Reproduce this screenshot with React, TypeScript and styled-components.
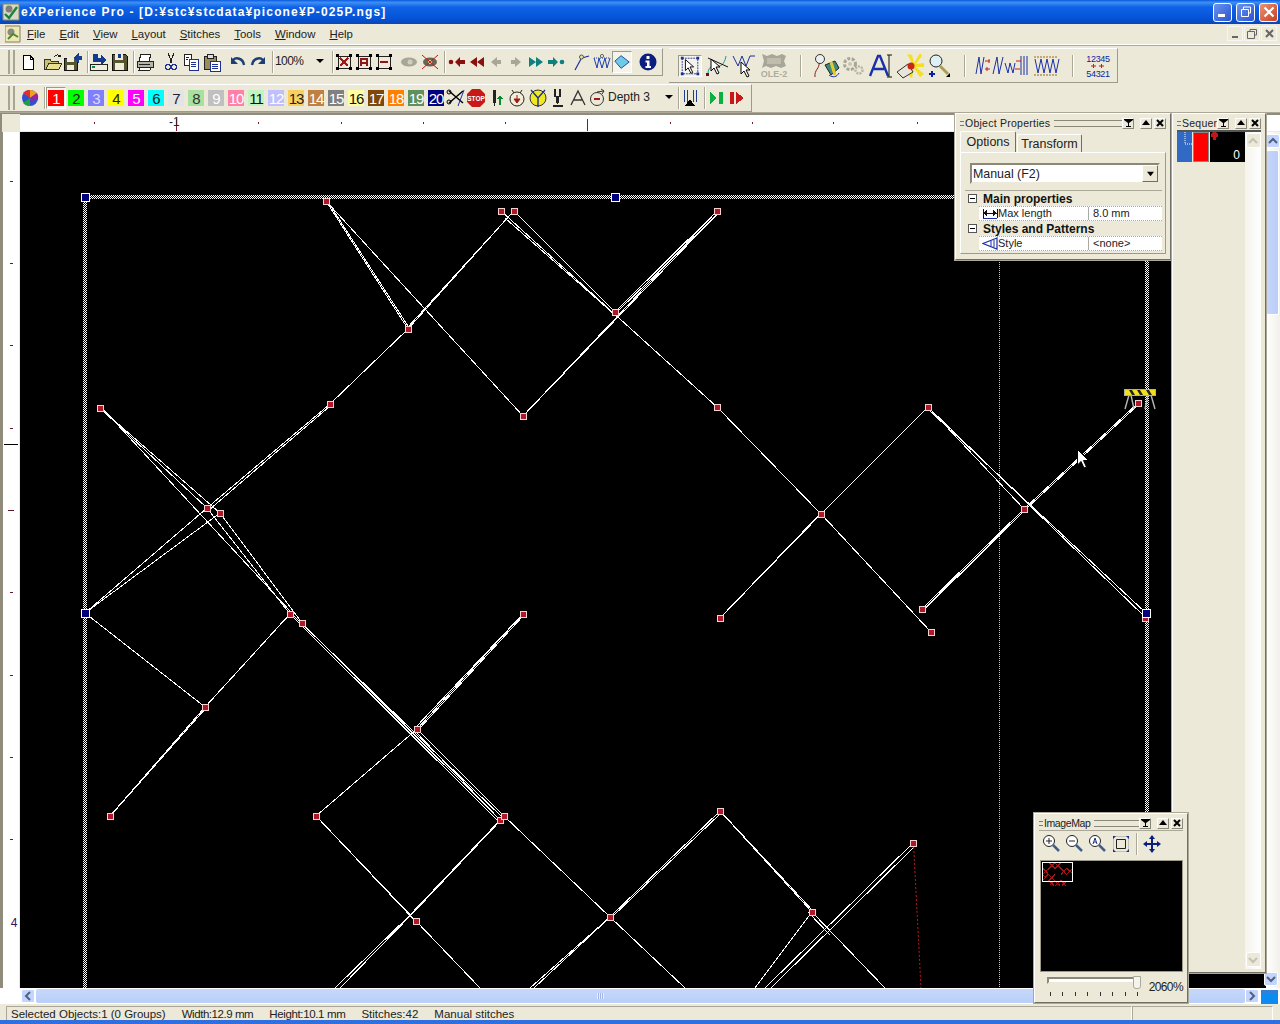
import React from 'react';
import styled, { createGlobalStyle } from 'styled-components';

const GlobalStyle = createGlobalStyle`
  html, body { margin: 0; padding: 0; background: #ece9d8; }
  body { font-family: "Liberation Sans", Arial, sans-serif; font-size: 12px; color: #000; }
`;

const Screen = styled.div`
  position: relative;
  width: 1280px;
  height: 1024px;
  overflow: hidden;
  display: flex;
  flex-direction: column;
  background: #ece9d8;
`;

/* ---------- window chrome ---------- */

const TitleBar = styled.div`
  height: 24px;
  flex: none;
  display: flex;
  align-items: center;
  padding: 0 2px 0 2px;
  background: linear-gradient(#0a5be0 0%, #3d8ff5 10%, #0f62e6 30%, #0554d8 75%, #0a46b8 100%);
  color: #fff;
`;

const TitleText = styled.span`
  margin-left: 1px;
  flex: 1;
  font-size: 12px;
  font-weight: bold;
  letter-spacing: 1.14px;
  white-space: nowrap;
`;

const CaptionButton = styled.div<{ $close?: boolean }>`
  width: 19px;
  height: 19px;
  margin-left: 4px;
  border: 1px solid #fff;
  border-radius: 3px;
  box-sizing: border-box;
  display: flex;
  align-items: center;
  justify-content: center;
  background: ${(p) => (p.$close ? 'linear-gradient(135deg,#e8937a,#c8401c)' : 'linear-gradient(135deg,#6a94ee,#2a54d0)')};
`;

const MenuBar = styled.div`
  height: 21px;
  flex: none;
  display: flex;
  align-items: center;
  padding: 0 2px 1px 5px;
  box-sizing: border-box;
  border-bottom: 1px solid #fff;
  box-shadow: 0 1px 0 #aca899;
  margin-bottom: 1px;
`;

const MenuItems = styled.div`
  display: flex;
  gap: 14px;
  margin-left: 6px;
  flex: 1;
  font-size: 11.4px;
`;

const MenuItem = styled.span`
  color: #222;
  u { text-decoration: underline; }
`;

const ChildButton = styled.div`
  width: 16px;
  height: 15px;
  margin-right: 1px;
  display: flex;
  align-items: center;
  justify-content: center;
  border: 1px solid #f6f5ee;
  box-sizing: border-box;
`;

/* ---------- toolbars ---------- */

const ToolRow = styled.div<{ $h: number }>`
  height: ${(p) => p.$h}px;
  flex: none;
  display: flex;
  align-items: flex-start;
  padding-top: 2px;
  box-sizing: border-box;
`;

const Band = styled.div<{ $w: number; $h: number; $ml?: number }>`
  width: ${(p) => p.$w}px;
  height: ${(p) => p.$h}px;
  margin-left: ${(p) => p.$ml ?? 0}px;
  flex: none;
  display: flex;
  align-items: center;
  box-sizing: border-box;
  border-top: 1px solid #fff;
  border-right: 1px solid #9d9a8a;
  border-bottom: 1px solid #9d9a8a;
`;

const Grip = styled.div`
  height: 24px;
  margin: 0 2px 0 8px;
  flex: none;
  border-left: 2px solid #a8a595;
  border-right: 2px solid #a8a595;
  box-sizing: border-box;
  width: 7px;
`;

const Slot = styled.div<{ $w?: number; $ml?: number; $active?: boolean }>`
  width: ${(p) => p.$w ?? 20}px;
  height: 22px;
  margin-left: ${(p) => p.$ml ?? 0}px;
  flex: none;
  display: flex;
  align-items: center;
  justify-content: center;
  box-sizing: border-box;
  ${(p) => p.$active && 'background: #f4f3ec; border: 1px solid; border-color: #9d9a8a #fff #fff #9d9a8a;'}
`;

const Sep = styled.div<{ $ml?: number }>`
  width: 1px;
  height: 22px;
  margin-left: ${(p) => p.$ml ?? 0}px;
  flex: none;
  background: #aca899;
  box-shadow: 1px 0 0 #fff;
`;

const Combo = styled.div<{ $w: number; $tight?: boolean }>`
  width: ${(p) => p.$w}px;
  height: 22px;
  flex: none;
  display: flex;
  align-items: center;
  justify-content: space-between;
  padding: 0 5px 2px ${(p) => (p.$tight ? 2 : 0)}px;
  box-sizing: border-box;
  color: #222;
  letter-spacing: ${(p) => (p.$tight ? -0.6 : 0)}px;
`;

const ComboArrow = styled.i`
  width: 0;
  height: 0;
  border: 4px solid transparent;
  border-top: 4px solid #000;
  border-bottom: 0;
`;

const SwatchGroup = styled.div`
  display: flex;
  margin-left: 1px;
`;

const Swatch = styled.div<{ $bg: string; $fg: string; $active?: boolean }>`
  width: 20px;
  height: 22px;
  flex: none;
  display: flex;
  align-items: center;
  justify-content: center;
  box-sizing: border-box;
  span {
    width: 16px;
    height: 16px;
    background: ${(p) => p.$bg};
    color: ${(p) => p.$fg};
    font-size: 15px;
    line-height: 17px;
    letter-spacing: -1px;
    text-align: center;
    white-space: nowrap;
  }
  ${(p) => p.$active && 'background: #f6f5ee; border: 1px solid; border-color: #9d9a8a #fff #fff #9d9a8a;'}
`;

/* ---------- work area ---------- */

const Workspace = styled.div`
  flex: 1;
  min-height: 0;
  display: grid;
  grid-template-columns: 20px 1fr 14px;
  grid-template-rows: 19px 1fr 18px;
  border-top: 1px solid #aca899;
`;

const Corner = styled.div`
  background: #ece9d8;
  border-top: 1px solid #8f8c7c;
  border-left: 2px solid #8f8c7c;
  box-sizing: border-box;
`;

const TopRuler = styled.div`
  grid-column: 2 / 4;
  position: relative;
  background: #fff;
  border-top: 2px solid #8f8c7c;
  margin-bottom: 1px;
`;

const LeftRuler = styled.div`
  position: relative;
  background: #fff;
  margin-left: 3px;
  margin-right: 1px;
  box-shadow: -3px 0 0 #8f8c7c;
`;

const TopTick = styled.i<{ $major?: boolean }>`
  position: absolute;
  background: #801830;
  top: ${(p) => (p.$major ? 4 : 7)}px;
  width: 1px;
  height: ${(p) => (p.$major ? 12 : 2)}px;
`;

const SideTick = styled.i<{ $long?: boolean }>`
  position: absolute;
  background: #60182c;
  left: ${(p) => (p.$long ? 5 : 7)}px;
  height: 1px;
  width: ${(p) => (p.$long ? 6 : 3)}px;
`;

/* where the mouse pointer is on the vertical ruler */
const CursorMark = styled.i`
  position: absolute;
  top: 312px;
  left: 1px;
  width: 14px;
  height: 1px;
  background: #000;
`;

const TopLabel = styled.span`
  position: absolute;
  left: 149px;
  top: 1px;
  color: #222;
  font-size: 12px;
  line-height: 12px;
`;

const SideLabel = styled.span`
  position: absolute;
  left: 4px;
  top: 785px;
  width: 14px;
  text-align: center;
  color: #301060;
  font-size: 12px;
  line-height: 12px;
`;

const Canvas = styled.div`
  position: relative;
  background: #000;
  min-height: 0;
  svg { display: block; }
`;

const VScroll = styled.div`
  position: relative;
  background: linear-gradient(90deg, #fff, #f1f0ea);
`;

const ScrollBtn = styled.div`
  position: absolute;
  display: flex;
  align-items: center;
  justify-content: center;
  width: 14px;
  height: 14px;
  border: 1px solid #fff;
  border-radius: 2px;
  box-sizing: border-box;
  background: #c3d5fd;
`;

const UpBtn = styled(ScrollBtn)`
  top: 2px;
  left: 0;
`;

const DownBtn = styled(ScrollBtn)`
  bottom: 2px;
  left: -2px;
`;

const LeftBtn = styled(ScrollBtn)`
  top: 1px;
  left: 21px;
`;

const RightBtn = styled(ScrollBtn)`
  top: 1px;
  right: 21px;
`;

const VThumb = styled.div`
  position: absolute;
  top: 18px;
  left: 0;
  right: 1px;
  height: 165px;
  border: 1px solid #fff;
  border-radius: 2px;
  box-sizing: border-box;
  background: linear-gradient(90deg, #c6d6fa, #b8cdf8);
`;

const HScroll = styled.div`
  grid-column: 1 / 4;
  position: relative;
  display: flex;
  padding: 0 0 0 20px;
  background: #fff;
  border-bottom: 2px solid #ece9d8;
  box-sizing: border-box;
`;

const HThumb = styled.div`
  position: absolute;
  left: 36px;
  right: 35px;
  top: 1px;
  height: 14px;
  border-radius: 2px;
  background: linear-gradient(#c6d8fb, #b9cff9);
  &::after {
    content: '';
    position: absolute;
    left: 561px;
    top: 4px;
    width: 7px;
    height: 6px;
    background: repeating-linear-gradient(90deg, #e8eefc 0 1px, #9fb5e8 1px 2px);
  }
`;

const BlueBox = styled.div`
  position: absolute;
  right: 2px;
  top: 2px;
  width: 17px;
  height: 14px;
  background: linear-gradient(#2f80d8 0 30%, #0c8cf0 30% 100%);
`;

const StatusBar = styled.div`
  height: 14px;
  flex: none;
  display: flex;
  padding-left: 6px;
  color: #222;
  white-space: nowrap;
  font-size: 11.5px;
`;

const StatusPane = styled.div<{ $w: number }>`
  width: ${(p) => p.$w}px;
  flex: none;
  display: flex;
  gap: 16px;
  align-items: center;
  padding-left: 4px;
  box-sizing: border-box;
  border-top: 1px solid #aca899;
  border-left: 1px solid #aca899;
  border-right: 1px solid #fff;
`;

const StatusText = styled.span<{ $squeeze?: number }>`
  letter-spacing: ${(p) => p.$squeeze ?? 0}px;
`;

const BottomEdge = styled.div`
  height: 4px;
  flex: none;
  background: #2f6fe0;
`;

/* ---------- floating palettes ---------- */

const Palette = styled.div<{ $x: number; $y: number; $w: number; $h: number }>`
  position: absolute;
  left: ${(p) => p.$x}px;
  top: ${(p) => p.$y}px;
  width: ${(p) => p.$w}px;
  height: ${(p) => p.$h}px;
  box-sizing: border-box;
  padding: 2px 4px 3px;
  background: #ece9d8;
  border: 1px solid;
  border-color: #fff #716f64 #716f64 #fff;
  box-shadow: 0 0 0 1px #aca899;
  display: flex;
  flex-direction: column;
`;

const PaletteTitle = styled.div<{ $spacing: number }>`
  height: 14px;
  flex: none;
  display: flex;
  align-items: center;
  font-size: 10.5px;
  letter-spacing: ${(p) => p.$spacing}px;
  color: #222;
  white-space: nowrap;
`;

const Dots = styled.i`
  width: 4px;
  height: 5px;
  margin-right: 1px;
  flex: none;
  border-top: 1px solid #777;
  border-bottom: 1px solid #777;
  box-sizing: border-box;
`;

const TitleLines = styled.i`
  flex: 1;
  height: 5px;
  margin: 0 0 0 4px;
  border-top: 1px solid #8a8878;
  border-bottom: 1px solid #8a8878;
`;

const TitleGap = styled.i`
  flex: 1;
`;

const PaletteBtn = styled.div<{ $ml: number }>`
  width: 12px;
  height: 11px;
  margin-left: ${(p) => p.$ml}px;
  flex: none;
  display: flex;
  align-items: center;
  justify-content: center;
  background: #ece9d8;
  border: 1px solid;
  border-color: #fff #8a8878 #8a8878 #fff;
  box-sizing: border-box;
`;

const Tabs = styled.div`
  display: flex;
  align-items: flex-end;
  height: 21px;
  margin-top: 1px;
`;

const Tab = styled.div<{ $active?: boolean }>`
  height: ${(p) => (p.$active ? 21 : 18)}px;
  width: ${(p) => (p.$active ? 56 : 65)}px;
  margin-left: ${(p) => (p.$active ? 0 : 1)}px;
  box-sizing: border-box;
  text-align: center;
  font-size: 12.5px;
  line-height: ${(p) => (p.$active ? 20 : 18)}px;
  color: #222;
  border: 1px solid;
  border-color: #fff #716f64 transparent #fff;
  border-bottom: 0;
  border-radius: 2px 2px 0 0;
`;

const TabBody = styled.div`
  flex: 1;
  margin-bottom: 2px;
  padding: 10px 3px 0 4px;
  border: 1px solid;
  border-color: #fff #9d9a8a #9d9a8a #fff;
`;

const Dropdown = styled.div`
  height: 21px;
  margin: 0 2px 0 5px;
  box-sizing: border-box;
  display: flex;
  align-items: center;
  justify-content: space-between;
  padding-left: 1px;
  background: #fff;
  border: 2px solid;
  border-color: #8a8878 #ece9d8 #ece9d8 #8a8878;
  font-size: 12.4px;
  color: #222;
`;

const DropBtn = styled.div`
  width: 16px;
  height: 17px;
  display: flex;
  align-items: center;
  justify-content: center;
  background: #ece9d8;
  border: 1px solid;
  border-color: #fff #716f64 #716f64 #fff;
  box-sizing: border-box;
`;

const PropGrid = styled.div`
  margin-top: 6px;
  border-top: 1px solid #aca899;
`;

const SectionRow = styled.div`
  height: 15px;
  display: flex;
  align-items: center;
  gap: 6px;
  padding-left: 3px;
  font-weight: bold;
  font-size: 12px;
  color: #111;
`;

const Expander = styled.i`
  position: relative;
  width: 9px;
  height: 9px;
  box-sizing: border-box;
  border: 1px solid #555;
  background: #fff;
  &::after {
    content: '';
    position: absolute;
    left: 1px;
    top: 3px;
    width: 5px;
    height: 1px;
    background: #000;
  }
`;

const PropRow = styled.div`
  height: 13px;
  margin-left: 14px;
  display: grid;
  grid-template-columns: 110px 1fr;
  background: #fff;
  border-top: 1px dotted #aaa;
  border-bottom: 1px dotted #aaa;
  font-size: 11px;
  line-height: 13px;
  color: #222;
`;

const PropName = styled.div`
  display: flex;
  align-items: center;
  padding-left: 3px;
  border-right: 1px solid #aaa;
`;

const PropValue = styled.div`
  padding-left: 4px;
`;

const SeqList = styled.div`
  flex: 1;
  display: grid;
  grid-template-columns: 68px 16px;
  border-top: 2px solid #555;
  min-height: 0;
`;

const SeqRow = styled.div`
  display: flex;
  height: 30px;
  gap: 1px;
`;

const SeqFold = styled.div`
  width: 15px;
  flex: none;
  background: #316ac5;
`;

const SeqColor = styled.div`
  width: 16px;
  flex: none;
  background: #ff0000;
  border: 1px solid #888;
  box-sizing: border-box;
`;

const SeqThumb = styled.div`
  flex: 1;
  position: relative;
  background: #000;
  color: #fff;
  text-align: right;
  padding: 17px 5px 0 0;
  font-size: 12px;
  line-height: 12px;
  svg { position: absolute; left: 0; top: 0; }
`;

const SeqScroll = styled.div`
  display: flex;
  flex-direction: column;
  justify-content: space-between;
  align-items: center;
  background: linear-gradient(90deg, #f4f3ec, #fff);
  padding: 1px 0 2px;
`;

const FadedBtn = styled.div`
  width: 15px;
  height: 15px;
  display: flex;
  align-items: center;
  justify-content: center;
  border: 1px solid #fff;
  border-radius: 2px;
  background: #ece9d8;
  box-sizing: border-box;
`;

const MapTools = styled.div`
  height: 26px;
  flex: none;
  border-top: 1px solid #aca899;
  display: flex;
  align-items: center;
  padding-left: 1px;
`;

const MapPreview = styled.div`
  position: relative;
  height: 110px;
  margin: 4px 0 0 2px;
  width: 141px;
  flex: none;
  background: #000;
  box-shadow: 0 0 0 1px #9d9a8a;
  svg { display: block; }
`;

const ViewFrame = styled.div`
  position: absolute;
  left: 1px;
  top: 1px;
  width: 31px;
  height: 20px;
  border: 1px solid #fff;
  box-sizing: border-box;
`;

const SliderRow = styled.div`
  display: flex;
  margin-top: 6px;
  padding-left: 8px;
  align-items: flex-start;
  justify-content: space-between;
`;

const SliderTrack = styled.div`
  position: relative;
  width: 94px;
  height: 19px;
  &::before {
    content: '';
    position: absolute;
    left: 0;
    right: 0;
    top: 0;
    height: 3px;
    background: #fff;
    border: 2px solid;
    border-color: #8a8878 #ece9d8 #ece9d8 #8a8878;
  }
`;

const SliderKnob = styled.i`
  position: absolute;
  right: 0;
  top: -1px;
  width: 6px;
  height: 11px;
  background: #f4f3ec;
  border: 1px solid #aca899;
  border-radius: 0 0 3px 3px;
`;

const SliderTicks = styled.div`
  position: absolute;
  left: 3px;
  right: 3px;
  bottom: 0;
  height: 4px;
  display: flex;
  justify-content: space-between;
  i { width: 1px; height: 4px; background: #333; }
`;

const ZoomValue = styled.span`
  font-size: 12px;
  color: #222;
  letter-spacing: -0.6px;
  padding-top: 3px;
`;

/* ---------- icons ---------- */

const I: React.FC<{ s?: number; h?: number; children: React.ReactNode }> = ({ s = 20, h = 20, children }) => (
  <svg width={s} height={h} viewBox={`0 0 ${s} ${h}`} fill="none" shapeRendering="crispEdges">{children}</svg>
);

const Tri: React.FC<{ up?: boolean; c?: string; n?: number }> = ({ up, c = '#000', n = 7 }) => (
  <svg width={n} height={n} viewBox="0 0 8 8"><path d={up ? 'M0 6L4 1L8 6Z' : 'M0 2L4 7L8 2Z'} fill={c} /></svg>
);

const Chevron: React.FC<{ d: string; c?: string }> = ({ d, c = '#4d6185' }) => (
  <svg width="10" height="10" viewBox="0 0 10 10" fill="none"><path d={d} stroke={c} strokeWidth="2" /></svg>
);

const FilterGlyph = () => (
  <svg width="9" height="8" viewBox="0 0 9 8"><path d="M0 0H9V1L5 4V7H7V8H2V7H4V4L0 1Z" fill="#000" /></svg>
);
const CloseGlyph = () => (
  <svg width="8" height="8" viewBox="0 0 8 8"><path d="M1 1L7 7M7 1L1 7" stroke="#000" strokeWidth="2" /></svg>
);

const arrow = (x: number, y: number, dir: number, c: string) => (
  <path d={`M${x} ${y - 5}L${x - 6 * dir} ${y}L${x} ${y + 5}V${y + 2}H${x + 4 * dir}V${y - 2}H${x}Z`} fill={c} />
);

const icons: Record<string, React.ReactNode> = {
  newDoc: <I><path d="M5 3.5H12L15.5 7V17.5H5.5V3.5Z" fill="#fff" stroke="#000" /><path d="M12 3V7H16" stroke="#000" /></I>,
  open: <I><path d="M1 7H7L8 9H15V17H1Z" fill="#c9c26a" stroke="#333" /><path d="M3 17L6 11H19L16 17Z" fill="#e8e090" stroke="#333" /><path d="M11 5C13 2 16 2 17 5M17 5L15 4M17 5L18 3" stroke="#222" /></I>,
  saveAs: <I><path d="M1 6H14V18H1Z" fill="#555530" stroke="#111" /><path d="M4 6H11V10H4ZM4 13H11V18H4Z" fill="#f0eed8" /><path d="M10 6L16 1V4H19V8H16V11Z" fill="#1d3f90" /></I>,
  importDoc: <I><path d="M1 12H18V18H1Z" fill="#f0eed8" stroke="#222" /><path d="M3 15H6" stroke="#0a8a30" strokeWidth="2" /><path d="M4 2H9V6H12V3L17 8L12 13V10H4Z" fill="#123a90" /></I>,
  save: <I><path d="M2 2H15L17 4V18H2Z" fill="#555530" stroke="#111" /><path d="M5 2H13V8H5ZM5 11H14V18H5Z" fill="#f0eed8" /><path d="M8 2H11V6H8Z" fill="#123a90" /></I>,
  print: <I><path d="M5 2H15L13 9H3Z" fill="#fff" stroke="#222" /><path d="M1 9H17V15H1Z" fill="#b8b5a5" stroke="#222" /><path d="M4 15H15L14 18H3Z" fill="#fff" stroke="#222" /><path d="M3 12H14" stroke="#222" /></I>,
  cut: <I><path d="M7 1L11 11M13 1L9 11" stroke="#222" /><circle cx="7" cy="15" r="2.5" stroke="#1d2f90" strokeWidth="1.5" /><circle cx="13" cy="15" r="2.5" stroke="#1d2f90" strokeWidth="1.5" /></I>,
  copy: <I><path d="M3 2H10V13H3Z" fill="#fff" stroke="#222" /><path d="M8 7H17V18H8Z" fill="#fff" stroke="#1d2f90" /><path d="M10 10H15M10 12H15M10 14H15" stroke="#1d2f90" /><path d="M5 5H8M5 7H7" stroke="#222" /></I>,
  paste: <I><path d="M2 4H14V17H2Z" fill="#9a8f5c" stroke="#222" /><path d="M5 2H11V6H5Z" fill="#ddd" stroke="#222" /><path d="M8 9H18V19H8Z" fill="#fff" stroke="#1d2f90" /><path d="M10 12H16M10 14H16M10 16H16" stroke="#1d2f90" /></I>,
  undo: <svg width="20" height="20" viewBox="0 0 20 20" fill="none"><path d="M5 8C8 5 15 6 16 13" stroke="#1d3f78" strokeWidth="2.4" /><path d="M3 5V12H10Z" fill="#1d3f78" /></svg>,
  redo: <svg width="20" height="20" viewBox="0 0 20 20" fill="none"><path d="M15 8C12 5 5 6 4 13" stroke="#1d3f78" strokeWidth="2.4" /><path d="M17 5V12H10Z" fill="#1d3f78" /></svg>,
  boxX: <I><path d="M4 4H16V16H4Z" fill="#f6e8d8" stroke="#222" /><path d="M6 6L14 14M14 6L6 14" stroke="#a01818" strokeWidth="2" /><path d="M2 2H5V5H2ZM15 2H18V5H15ZM2 15H5V18H2ZM15 15H18V18H15Z" fill="#000" /></I>,
  boxA: <I><path d="M4 4H16V16H4Z" fill="#f6e8d8" stroke="#222" /><path d="M7 14V7H13V14M7 11H13" stroke="#8a1818" strokeWidth="1.6" /><path d="M2 2H5V5H2ZM15 2H18V5H15ZM2 15H5V18H2ZM15 15H18V18H15Z" fill="#000" /></I>,
  boxMinus: <I><path d="M4 4H16V16H4Z" fill="#f6e8d8" stroke="#222" /><path d="M6 10H14" stroke="#8a1818" strokeWidth="2" /><path d="M2 2H5V5H2ZM15 2H18V5H15ZM2 15H5V18H2ZM15 15H18V18H15Z" fill="#000" /></I>,
  eyeGray: <svg width="20" height="20" viewBox="0 0 20 20"><ellipse cx="10" cy="10" rx="8" ry="4.5" fill="#a8a698" /><circle cx="11" cy="10" r="2.5" fill="#d0cebf" /></svg>,
  eyeCross: <svg width="20" height="20" viewBox="0 0 20 20" fill="none"><ellipse cx="10" cy="10" rx="7" ry="4.5" fill="#6a6655" /><circle cx="10" cy="10" r="2" fill="#e8e090" /><path d="M2 3L18 17M18 3L2 17" stroke="#c01818" /></svg>,
  dotLeft: <svg width="20" height="20" viewBox="0 0 20 20"><circle cx="4" cy="10" r="2.3" fill="#8a1010" /><path d="M8 10L13 5V8H18V12H13V15Z" fill="#8a1010" /></svg>,
  twoLeft: <svg width="20" height="20" viewBox="0 0 20 20"><path d="M10 5L3 10L10 15ZM17 5L10 10L17 15Z" fill="#8a1010" /></svg>,
  grayLeft: <svg width="18" height="20" viewBox="0 0 18 20">{arrow(9, 10, 1, '#a8a698')}</svg>,
  grayRight: <svg width="18" height="20" viewBox="0 0 18 20">{arrow(9, 10, -1, '#a8a698')}</svg>,
  twoRight: <svg width="20" height="20" viewBox="0 0 20 20"><path d="M3 5L10 10L3 15ZM10 5L17 10L10 15Z" fill="#0e8080" /></svg>,
  rightDot: <svg width="20" height="20" viewBox="0 0 20 20"><path d="M12 10L7 5V8H2V12H7V15Z" fill="#0e8080" /><circle cx="16" cy="10" r="2.3" fill="#0e8080" /></svg>,
  nodeLine: <svg width="20" height="20" viewBox="0 0 20 20" fill="none"><path d="M3 18L9 7" stroke="#1a2fa0" strokeWidth="1.2" /><path d="M10 6L17 4" stroke="#1a2fa0" strokeWidth="1.2" /><circle cx="9.5" cy="5" r="2" fill="#e8e8a0" stroke="#555" /></svg>,
  zigzag: <svg width="20" height="20" viewBox="0 0 20 20" fill="none"><path d="M2 6L5 16L7 6L10 16L13 6L15 16L18 6" stroke="#1a3fb0" /><path d="M2 6H18" stroke="#1a3fb0" strokeDasharray="1 1" /><circle cx="10" cy="4" r="1.6" stroke="#666" /></svg>,
  diamond: <svg width="20" height="20" viewBox="0 0 20 20"><path d="M2 9L9 3L18 10L9 17Z" fill="#6ecbe8" stroke="#1a3f90" /></svg>,
  info: <svg width="20" height="20" viewBox="0 0 20 20"><circle cx="10" cy="10" r="8.5" fill="#0a1f80" /><path d="M8.5 4H11.5V7H8.5ZM7.5 8.5H11.5V14H13V16H7.5V14H9V10.5H7.5Z" fill="#fff" /></svg>,
  pointer: <svg width="24" height="24" viewBox="0 0 24 24" fill="none"><path d="M3.5 3.5H20.5V20.5H3.5Z" stroke="#1a2f90" strokeDasharray="2 1" /><path d="M7 5V17L10 14L13 20L15 19L12 13H16Z" fill="#fff" stroke="#000" /><path d="M2 2H5V5H2ZM19 2H22V5H19ZM2 19H5V22H2ZM19 19H22V22H19Z" fill="#1a2f90" /></svg>,
  bezier: <svg width="24" height="24" viewBox="0 0 24 24" fill="none"><path d="M3 20C3 14 6 11 12 12C18 13 20 7 21 2" stroke="#1a9a90" /><path d="M3 4L23 13" stroke="#111" /><path d="M6 5V17L9 14L12 20L14 19L11 13H15Z" fill="#fff" stroke="#000" /><rect x="1" y="19" width="3" height="3" fill="#6a1010" /></svg>,
  zigPointer: <svg width="24" height="24" viewBox="0 0 24 24" fill="none"><path d="M1 2L6 12L10 2L14 12L18 2L23 2" stroke="#1a2fa0" /><path d="M9 8V20L12 17L15 23L17 22L14 16H18Z" fill="#fff" stroke="#000" /></svg>,
  ole: <svg width="30" height="26" viewBox="0 0 30 26"><path d="M3 1L8 3L13 1L18 3L23 1L27 3L25 8L27 13L22 15L17 13L12 15L7 13L3 15L5 8Z" fill="#a8a698" /><path d="M8 5H22V11H8Z" fill="#c0bdad" /><text x="15" y="24" textAnchor="middle" fontSize="9" fontWeight="bold" fill="#aeac9c" fontFamily="Liberation Sans">OLE-2</text></svg>,
  thread: <svg width="30" height="26" viewBox="0 0 30 26" fill="none"><circle cx="9" cy="6" r="4.5" fill="#eee" stroke="#333" /><path d="M8 10C9 15 3 17 4 24" stroke="#8a1818" /><path d="M14 12L24 8L28 15L20 22Z" fill="#3a8a80" stroke="#222" /><path d="M20 9L24 22" stroke="#e8c830" strokeWidth="3" /><path d="M18 22C22 25 26 24 28 20" stroke="#1a2fa0" /></svg>,
  gears: <svg width="24" height="24" viewBox="0 0 24 24" fill="none"><circle cx="9" cy="10" r="5.5" stroke="#a8a698" strokeWidth="3" strokeDasharray="3 1.5" /><circle cx="18" cy="16" r="3.5" stroke="#b8b5a5" strokeWidth="2.5" strokeDasharray="2 1" /><circle cx="9" cy="10" r="2" fill="#c8c5b5" /></svg>,
  aiText: <svg width="24" height="26" viewBox="0 0 24 26" fill="none"><path d="M1 23L9 3H11L19 23M5 16H15" stroke="#1a2fa8" strokeWidth="2.4" /><path d="M20 2V24M18 2H23M18 24H23" stroke="#111" /></svg>,
  sun: <svg width="30" height="28" viewBox="0 0 30 28" fill="none"><path d="M18 13L12 2L17 3L19 11L25 1L27 4L21 12L29 11V15L21 15L29 22L25 25L19 16L17 26L14 24L17 15Z" fill="#f5e020" /><path d="M2 20L13 12L18 20L8 26Z" fill="#e8e6da" stroke="#333" /><circle cx="16" cy="14" r="3.5" fill="#c82818" /></svg>,
  zoomPlus: <svg width="24" height="26" viewBox="0 0 24 26" fill="none"><circle cx="10" cy="8" r="6" fill="#dff0f5" stroke="#222" /><path d="M14 13L22 21" stroke="#a8a050" strokeWidth="3" /><path d="M20 24H24V20Z" fill="#000" /><path d="M3 21H9M6 18V24" stroke="#0a1fb0" strokeWidth="2" /></svg>,
  stitchA: <svg width="30" height="22" viewBox="0 0 30 22" fill="none"><path d="M2 19L5 2L7 19L10 2M19 19L23 2L25 19L29 2" stroke="#1a2fa8" /><path d="M11 6H16M11 14H16M15 4V8M13 12V16" stroke="#c81818" /></svg>,
  stitchB: <svg width="26" height="22" viewBox="0 0 26 22" fill="none"><path d="M1 8L4 18L6 8L9 18L11 8M17 1V20M20 1V20M23 1V20" stroke="#1a2fa8" /><path d="M12 6H17M11 14H16" stroke="#c81818" /></svg>,
  stitchC: <svg width="30" height="22" viewBox="0 0 30 22" fill="none"><path d="M4 4L7 18L10 4L13 18L16 4L19 18L22 4L25 18L28 4" stroke="#1a2fa8" /><path d="M3 2H27M3 20H27" stroke="#a06818" strokeDasharray="2 1" /></svg>,
  numbers: <svg width="30" height="26" viewBox="0 0 30 26"><text x="15" y="9" textAnchor="middle" fontSize="9" letterSpacing="-0.3" fill="#0a1fa0" fontFamily="Liberation Sans">12345</text><text x="15" y="24" textAnchor="middle" fontSize="9" letterSpacing="-0.3" fill="#0a1fa0" fontFamily="Liberation Sans">54321</text><path d="M8 13H13M10.5 11V15M16 13H21M18.5 11V15" stroke="#c81818" /></svg>,
  wheel: <svg width="20" height="20" viewBox="0 0 20 20"><circle cx="10" cy="10" r="8" fill="#3050d0" /><path d="M10 10L3 5A8 8 0 0 1 10 2Z" fill="#e03030" /><path d="M10 10V2A8 8 0 0 1 17 5Z" fill="#f0a020" /><path d="M10 10L17 5A8 8 0 0 1 18 12Z" fill="#a020a0" /><path d="M10 10L3 15A8 8 0 0 0 10 18Z" fill="#20a040" /><circle cx="12" cy="12" r="2" fill="#8030a0" /></svg>,
  scissors: <svg width="20" height="20" viewBox="0 0 20 20" fill="none"><path d="M3 3L17 15M17 3L3 15" stroke="#000" strokeWidth="1.5" /><circle cx="3" cy="4" r="2" stroke="#000" /><circle cx="3" cy="14" r="2" stroke="#000" /><path d="M12 18L18 2" stroke="#1a2fa8" /></svg>,
  stop: <svg width="20" height="20" viewBox="0 0 20 20"><path d="M6 1H14L19 6V14L14 19H6L1 14V6Z" fill="#c81818" /><text x="10" y="12.5" textAnchor="middle" fontSize="6.5" fontWeight="bold" fill="#fff" fontFamily="Liberation Sans">STOP</text></svg>,
  needleUp: <I><path d="M6 2H9V14L7.5 18L6 14Z" fill="#222" /><path d="M13 7L10 11H12V17H14V11H16Z" fill="#0a8a30" /></I>,
  clock: <svg width="20" height="20" viewBox="0 0 20 20" fill="none"><circle cx="10" cy="11" r="7" fill="#f0eed8" stroke="#222" /><path d="M5 2L7 5M15 2L13 5" stroke="#222" /><path d="M10 7V12M7 11H13L10 15Z" fill="#a01818" stroke="#a01818" /></svg>,
  yellowY: <svg width="20" height="20" viewBox="0 0 20 20" fill="none"><circle cx="10" cy="10" r="8" fill="#f0e820" stroke="#333" /><path d="M3 2L10 10L17 2M10 10V19" stroke="#1a2f90" strokeWidth="1.4" /></svg>,
  needleDown: <I><path d="M7 1V9M12 1V9" stroke="#222" strokeWidth="1.6" /><path d="M8 8H11V14L9.5 16L8 14Z" fill="#222" /><path d="M5 18H15" stroke="#222" strokeWidth="2" /></I>,
  letterA: <svg width="20" height="20" viewBox="0 0 20 20" fill="none"><path d="M3 17L10 3L17 17M6 12H14" stroke="#333" strokeWidth="1.3" /></svg>,
  depth: <svg width="20" height="20" viewBox="0 0 20 20" fill="none"><circle cx="9" cy="11" r="6.5" stroke="#333" /><path d="M6 11H12" stroke="#a01818" strokeWidth="2" /><path d="M9 4L16 3M16 3L13 1M16 3L14 6" stroke="#333" /></svg>,
  bars: <I><path d="M4 2V14M7 2V14M13 2V14M16 2V14" stroke="#1a3f90" /><path d="M10 11L15 18H5Z" fill="#000" /></I>,
  greenPlay: <I><path d="M3 4L10 10L3 16Z" fill="#0ab040" /><path d="M12 4H16V16H12Z" fill="#0ab040" /></I>,
  redPlay: <I><path d="M3 4H7V16H3Z" fill="#c81818" /><path d="M9 4L17 10L9 16Z" fill="#c81818" /></I>,
  zoomIn: <svg width="22" height="20" viewBox="0 0 22 20" fill="none"><circle cx="8" cy="7" r="5.5" fill="#fff" stroke="#222" /><path d="M5 7H11M8 4V10" stroke="#222" /><path d="M12 11L18 17" stroke="#40608a" strokeWidth="2.5" /></svg>,
  zoomOut: <svg width="22" height="20" viewBox="0 0 22 20" fill="none"><circle cx="8" cy="7" r="5.5" fill="#fff" stroke="#222" /><path d="M5 7H11" stroke="#222" /><path d="M12 11L18 17" stroke="#40608a" strokeWidth="2.5" /></svg>,
  zoomAuto: <svg width="22" height="20" viewBox="0 0 22 20" fill="none"><circle cx="8" cy="7" r="5.5" fill="#fff" stroke="#222" /><path d="M6 10L8 4L10 10M7 8H9" stroke="#1a2f90" /><path d="M12 11L18 17" stroke="#40608a" strokeWidth="2.5" /></svg>,
  fit: <svg width="20" height="20" viewBox="0 0 20 20" fill="none"><path d="M2.5 2.5H17.5V17.5H2.5Z" stroke="#999" strokeDasharray="1 1" /><path d="M5.5 5.5H14.5V14.5H5.5Z" stroke="#222" /><path d="M2 2H5L2 5ZM18 2H15L18 5ZM2 18H5L2 15ZM18 18H15L18 15Z" fill="#1a2f90" /></svg>,
  move: <svg width="20" height="20" viewBox="0 0 20 20"><path d="M10 1L13 5H11V9H15V7L19 10L15 13V11H11V15H13L10 19L7 15H9V11H5V13L1 10L5 7V9H9V5H7Z" fill="#0a1f80" /></svg>,
  widthMark: <svg width="16" height="11" viewBox="0 0 16 11" fill="none" shapeRendering="crispEdges"><path d="M1 1V10M15 1V10M1 5H15" stroke="#111" /><path d="M1 10H15" stroke="#1a2fa8" /><path d="M1 5L5 2V8ZM15 5L11 2V8Z" fill="#111" /></svg>,
  styleMark: <svg width="16" height="13" viewBox="0 0 16 13" fill="none"><path d="M15 1L1 6.5L15 12Z" stroke="#1a2fa8" strokeWidth="1.2" /><path d="M9 4V9M12 3V10" stroke="#1a2fa8" /></svg>,
  appSmall: <svg width="16" height="18" viewBox="0 0 16 18"><path d="M0 1H15V17H0Z" fill="#efe7b4" stroke="#85805a" /><circle cx="6" cy="7" r="3.5" fill="#8a8a80" /><path d="M3 14L8 9L13 12" stroke="#4a8a30" strokeWidth="2" fill="none" /></svg>,
  appTitle: <svg width="18" height="18" viewBox="0 0 18 18"><path d="M1 1H17V17H1Z" fill="#d8d8c8" stroke="#8a8a60" /><circle cx="7" cy="6" r="3.5" fill="#7f7f78" /><path d="M3 11L7 15L15 4" stroke="#20803a" strokeWidth="2.4" fill="none" /></svg>,
};

/* ---------- toolbar data ---------- */

type Tool = { k: string; ml?: number; w?: number; active?: boolean } | { sep: number };

const mainTools: Tool[] = [
  { k: 'newDoc', ml: 1 }, { k: 'open', ml: 5 }, { k: 'saveAs' }, { sep: 4 },
  { k: 'importDoc', ml: 1 }, { k: 'save', ml: 1 }, { sep: 3 },
  { k: 'print', ml: 2 }, { k: 'cut', ml: 5 }, { k: 'copy' }, { k: 'paste', ml: 1 },
  { k: 'undo', ml: 6 }, { k: 'redo' }, { sep: 4 },
];

const viewTools: Tool[] = [
  { sep: 3 }, { k: 'boxX', ml: 1 }, { k: 'boxA' }, { k: 'boxMinus' },
  { k: 'eyeGray', ml: 5 }, { k: 'eyeCross', ml: 1 }, { sep: 4 },
  { k: 'dotLeft', ml: 2 }, { k: 'twoLeft' }, { k: 'grayLeft', w: 18, ml: 1 }, { k: 'grayRight', w: 18 },
  { k: 'twoRight', ml: 2 }, { k: 'rightDot' }, { k: 'nodeLine', ml: 6 }, { k: 'zigzag' },
  { k: 'diamond', active: true }, { k: 'info', ml: 6 },
];

const editTools: Tool[] = [
  { k: 'pointer', w: 24, ml: 9, active: true }, { k: 'bezier', w: 24, ml: 3 }, { k: 'zigPointer', w: 24, ml: 3 },
  { k: 'ole', w: 30, ml: 3 }, { sep: 11 }, { k: 'thread', w: 30, ml: 10 }, { k: 'gears', w: 24, ml: 0 },
  { k: 'aiText', w: 24, ml: 4 }, { k: 'sun', w: 30, ml: 2 }, { k: 'zoomPlus', w: 24, ml: 1 }, { sep: 14 },
  { k: 'stitchA', w: 30, ml: 9 }, { k: 'stitchB', w: 26 }, { k: 'stitchC', w: 30, ml: 1 }, { sep: 11 },
  { k: 'numbers', w: 30, ml: 10 },
];

const threadTools: Tool[] = [
  { k: 'scissors' }, { k: 'stop' }, { k: 'needleUp', ml: 1 }, { k: 'clock' }, { k: 'yellowY', ml: 1 },
  { k: 'needleDown' }, { k: 'letterA' }, { k: 'depth' },
];

const renderTools = (list: Tool[]) =>
  list.map((t, i) =>
    'sep' in t ? (
      <Sep key={i} $ml={t.sep} />
    ) : (
      <Slot key={i} $ml={t.ml} $w={t.w} $active={t.active}>{icons[t.k]}</Slot>
    ),
  );

const swatches: [string, string][] = [
  ['#ff0000', '#fff'], ['#00ff00', '#222'], ['#8080ff', '#dde'], ['#ffff00', '#222'], ['#ff00ff', '#fff'],
  ['#00ffff', '#222'], ['#e4e4e4', '#222'], ['#a8e0a0', '#333'], ['#c0c0c0', '#fff'], ['#ff80a8', '#fff'],
  ['#c0f4c0', '#111'], ['#c0c0ff', '#fff'], ['#f8d060', '#222'], ['#c08040', '#fff'], ['#808080', '#fff'],
  ['#ffffa0', '#111'], ['#804808', '#fff'], ['#ff8000', '#fff'], ['#609060', '#fff'], ['#000080', '#fff'],
];

const menus = ['File', 'Edit', 'View', 'Layout', 'Stitches', 'Tools', 'Window', 'Help'];
const topTicks = [94, 176, 258, 341, 423, 505, 587, 670, 752, 833, 917, 998];
const sideTicks = [181, 263, 345, 428, 510, 592, 675, 757, 839];

/* ---------- stitch drawing (screen coordinates) ---------- */

const stitches = [
  '326,201 408,329', '328,202 408,326',
  '326,201 523,416', '523,416 717,211', '523,416 719,212',
  '408,329 510,215', '330,404 408,329', '408,327 512,213',
  '85,613 207,508 330,404', '85,613 220,513', '209,510 330,406',
  '100,408 207,508 290,614', '100,408 220,513 302,623', '103,409 290,611',
  '501,211 717,407', '514,211 615,312', '505,218 615,315',
  '615,312 717,211', '617,312 719,213',
  '717,407 821,514 931,632', '821,514 720,618', '819,516 722,616', '820,514 721,617',
  '821,514 928,407 1146,618', '928,407 1024,509', '930,411 1146,613',
  '1024,509 922,609', '1026,509 925,609', '1025,510 923,610', '1024,509 1138,403', '1025,510 1139,404', '823,516 929,630',
  '85,613 205,707 290,614', '205,707 110,816', '205,709 112,814', '206,708 111,815', '288,616 207,705',
  '290,614 497,820', '302,623 500,820', '294,616 503,818',
  '523,614 417,729 316,816 416,921 480,988', '521,616 415,728', '523,616 419,729',
  '417,729 504,816 610,917 685,988', '415,731 500,820', '318,818 418,924',
  '504,816 410,915 335,988', '501,820 414,912 340,988',
  '610,917 720,811 812,912 885,988', '612,917 720,814', '722,813 814,912',
  '610,917 530,988', '608,919 534,988', '812,912 755,988',
  '913,843 765,988', '915,846 771,988', '808,912 830,935',
];

const redNodes = [
  [326, 201], [408, 329], [501, 211], [514, 211], [717, 211], [615, 312], [523, 416], [330, 404], [717, 407],
  [100, 408], [207, 508], [220, 513], [290, 614], [302, 623], [205, 707], [110, 816], [523, 614], [417, 729],
  [316, 816], [500, 820], [504, 816], [416, 921], [610, 917], [720, 811], [812, 912], [913, 843], [821, 514],
  [928, 407], [1024, 509], [922, 609], [720, 618], [931, 632], [1145, 618], [1138, 403],
];

const blueNodes = [[85, 197], [615, 197], [85, 613], [1146, 613]];

const StitchCanvas = () => (
  <svg width="1246" height="856" viewBox="20 132 1246 856">
    <defs>
      <pattern id="check" width="2" height="2" patternUnits="userSpaceOnUse">
        <rect width="2" height="2" fill="#000" />
        <rect width="1" height="1" fill="#fff" />
        <rect x="1" y="1" width="1" height="1" fill="#fff" />
      </pattern>
    </defs>
    <path d="M999.5 132V988" stroke="#c8c8c8" strokeDasharray="1 1" />
    <rect x="83" y="195" width="1066" height="4" fill="url(#check)" />
    <rect x="83" y="195" width="4" height="793" fill="url(#check)" />
    <rect x="1145" y="195" width="4" height="793" fill="url(#check)" />
    <g fill="none" stroke="#fff" strokeWidth="1" shapeRendering="crispEdges">
      {stitches.map((p) => <polyline key={p} points={p} />)}
    </g>
    <path d="M913.5 843L921 988" stroke="#c01820" strokeDasharray="2 2" />
    {redNodes.map(([x, y]) => (
      <rect key={`${x}-${y}`} x={x - 3} y={y - 3} width="6" height="6" fill="#b01828" stroke="#f4d0d0" strokeWidth="1" shapeRendering="crispEdges" />
    ))}
    {blueNodes.map(([x, y]) => (
      <rect key={`${x}-${y}`} x={x - 4} y={y - 4} width="8" height="8" fill="#00007a" stroke="#fff" strokeWidth="1" shapeRendering="crispEdges" />
    ))}
    {/* barricade marking the last stitch */}
    <path d="M1129 395L1125 409M1131 395L1134 409M1148 395L1145 409M1151 395L1155 409" stroke="#b8b8b8" strokeWidth="1.4" />
    <rect x="1124.5" y="389.5" width="31" height="6" fill="#f0e020" stroke="#b0b0a0" />
    <path d="M1129 390H1132L1135 395H1132ZM1137 390H1140L1143 395H1140ZM1146 390H1149L1152 395H1149Z" fill="#222" />
    {/* mouse pointer */}
    <path d="M1077.5 449.5V465L1081 461.5L1084 468L1086.5 467L1083.5 460.5H1088.5Z" fill="#fff" stroke="#000" />
  </svg>
);

/* the overview is the same drawing, scaled down */
const MiniMap = () => (
  <svg width="141" height="110" viewBox="0 0 141 110" fill="none">
    <g transform="translate(-1.4 -4.7) scale(0.0295)" stroke="#a01818" shapeRendering="crispEdges">
      {stitches.map((p) => <polyline key={p} points={p} vectorEffect="non-scaling-stroke" />)}
    </g>
  </svg>
);

const PaletteHeader: React.FC<{ title: string; lines?: boolean; spacing?: number }> = ({ title, lines, spacing = 0.25 }) => (
  <PaletteTitle $spacing={spacing}>
    <Dots />
    {title}
    {lines ? <TitleLines /> : <TitleGap />}
    <PaletteBtn $ml={0}><FilterGlyph /></PaletteBtn>
    <PaletteBtn $ml={6}><Tri up n={8} /></PaletteBtn>
    <PaletteBtn $ml={2}><CloseGlyph /></PaletteBtn>
  </PaletteTitle>
);

export default function App() {
  return (
    <Screen>
      <GlobalStyle />
      <TitleBar>
        {icons.appTitle}
        <TitleText>eXPerience Pro - [D:¥stc¥stcdata¥picone¥P-025P.ngs]</TitleText>
        <CaptionButton>
          <svg width="11" height="11" viewBox="0 0 11 11"><rect x="1" y="7" width="7" height="3" fill="#fff" /></svg>
        </CaptionButton>
        <CaptionButton>
          <svg width="12" height="12" viewBox="0 0 12 12" fill="none" stroke="#fff"><path d="M3.5 3V1H10.5V7H8.5" /><path d="M1.5 3.5H8.5V10.5H1.5Z" /></svg>
        </CaptionButton>
        <CaptionButton $close>
          <svg width="12" height="12" viewBox="0 0 12 12"><path d="M1.5 1.5L10.5 10.5M10.5 1.5L1.5 10.5" stroke="#fff" strokeWidth="2.2" /></svg>
        </CaptionButton>
      </TitleBar>

      <MenuBar>
        {icons.appSmall}
        <MenuItems>
          {menus.map((m) => (
            <MenuItem key={m}><u>{m[0]}</u>{m.slice(1)}</MenuItem>
          ))}
        </MenuItems>
        <ChildButton><svg width="8" height="8" viewBox="0 0 8 8"><rect x="1" y="6" width="6" height="2" fill="#666" /></svg></ChildButton>
        <ChildButton><svg width="10" height="10" viewBox="0 0 10 10" fill="none" stroke="#666"><path d="M3 2V.5H9.5V6H8" /><path d="M.5 2.5H7.5V9.5H.5Z" /></svg></ChildButton>
        <ChildButton><svg width="9" height="9" viewBox="0 0 9 9"><path d="M1 1L8 8M8 1L1 8" stroke="#666" strokeWidth="2" /></svg></ChildButton>
      </MenuBar>

      <ToolRow $h={36}>
        <Band $w={663} $h={28}>
          <Grip />
          {renderTools(mainTools)}
          <Combo $w={56} $tight><span>100%</span><ComboArrow /></Combo>
          {renderTools(viewTools)}
        </Band>
        <Band $w={449} $h={35} $ml={6}>
          {renderTools(editTools)}
        </Band>
      </ToolRow>

      <ToolRow $h={30}>
        <Band $w={752} $h={28}>
          <Grip />
          <Slot $ml={3}>{icons.wheel}</Slot>
          <Sep $ml={4} />
          <SwatchGroup>
            {swatches.map(([bg, fg], i) => (
              <Swatch key={i} $bg={bg} $fg={fg} $active={i === 0}><span>{i + 1}</span></Swatch>
            ))}
          </SwatchGroup>
          {renderTools(threadTools)}
          <Combo $w={70}><span>Depth 3</span><ComboArrow /></Combo>
          <Sep />
          <Slot $ml={1}>{icons.bars}</Slot>
          <Sep $ml={4} />
          <Slot $ml={2}>{icons.greenPlay}</Slot>
          <Slot>{icons.redPlay}</Slot>
        </Band>
      </ToolRow>

      <Workspace>
        <Corner />
        <TopRuler>
          {topTicks.map((x) => (
            <TopTick key={x} $major={x === 176 || x === 587 || x === 998} style={{ left: x - 20 }} />
          ))}
          <TopLabel>-1</TopLabel>
        </TopRuler>
        <LeftRuler>
          {sideTicks.map((y) => (
            <SideTick key={y} $long={y === 510} style={{ top: y - 132 }} />
          ))}
          <CursorMark />
          <SideLabel>4</SideLabel>
        </LeftRuler>
        <Canvas><StitchCanvas /></Canvas>
        <VScroll>
          <VThumb />
          <UpBtn><Chevron d="M1 7L5 3L9 7" /></UpBtn>
          <DownBtn><Chevron d="M1 3L5 7L9 3" /></DownBtn>
        </VScroll>
        <HScroll>
          <LeftBtn><Chevron d="M7 1L3 5L7 9" /></LeftBtn>
          <HThumb />
          <RightBtn><Chevron d="M3 1L7 5L3 9" /></RightBtn>
          <BlueBox />
        </HScroll>
      </Workspace>

      <StatusBar>
        <StatusPane $w={1126}>
          <StatusText>Selected Objects:1 (0 Groups)</StatusText>
          <StatusText $squeeze={-0.45}>Width:12.9 mm</StatusText>
          <StatusText $squeeze={-0.35}>Height:10.1 mm</StatusText>
          <StatusText>Stitches:42</StatusText>
          <StatusText>Manual stitches</StatusText>
        </StatusPane>
        <StatusPane $w={141} />
      </StatusBar>
      <BottomEdge />

      <Palette $x={955} $y={113} $w={216} $h={147}>
        <PaletteHeader title="Object Properties" lines />
        <Tabs>
          <Tab $active>Options</Tab>
          <Tab>Transform</Tab>
        </Tabs>
        <TabBody>
          <Dropdown>
            Manual (F2)
            <DropBtn><Tri /></DropBtn>
          </Dropdown>
          <PropGrid>
            <SectionRow><Expander />Main properties</SectionRow>
            <PropRow>
              <PropName>{icons.widthMark}Max length</PropName>
              <PropValue>8.0 mm</PropValue>
            </PropRow>
            <SectionRow><Expander />Styles and Patterns</SectionRow>
            <PropRow>
              <PropName>{icons.styleMark}Style</PropName>
              <PropValue>&lt;none&gt;</PropValue>
            </PropRow>
          </PropGrid>
        </TabBody>
      </Palette>

      <Palette $x={1172} $y={113} $w={94} $h={860}>
        <PaletteHeader title="Sequer" />
        <SeqList>
          <div>
            <SeqRow>
              <SeqFold>
                <svg width="15" height="30" viewBox="0 0 15 30" fill="none"><path d="M8 0V12H15" stroke="#fff" strokeDasharray="1 1" /></svg>
              </SeqFold>
              <SeqColor />
              <SeqThumb>
                <svg width="9" height="8" viewBox="0 0 9 8"><path d="M1 2L3 0H6L8 2V5H6V8H3V5H1Z" fill="#c01818" /></svg>
                0
              </SeqThumb>
            </SeqRow>
          </div>
          <SeqScroll>
            <FadedBtn><Chevron d="M1 7L5 3L9 7" c="#c4c2b4" /></FadedBtn>
            <FadedBtn><Chevron d="M1 3L5 7L9 3" c="#c4c2b4" /></FadedBtn>
          </SeqScroll>
        </SeqList>
      </Palette>

      <Palette $x={1034} $y={813} $w={154} $h={190}>
        <PaletteHeader title="ImageMap" lines spacing={-0.4} />
        <MapTools>
          <Slot $w={23}>{icons.zoomIn}</Slot>
          <Slot $w={23}>{icons.zoomOut}</Slot>
          <Slot $w={23}>{icons.zoomAuto}</Slot>
          <Slot $w={23}>{icons.fit}</Slot>
          <Sep $ml={4} />
          <Slot $w={20} $ml={5}>{icons.move}</Slot>
        </MapTools>
        <MapPreview>
          <MiniMap />
          <ViewFrame />
        </MapPreview>
        <SliderRow>
          <SliderTrack>
            <SliderKnob />
            <SliderTicks>{[0, 1, 2, 3, 4, 5, 6, 7].map((n) => <i key={n} />)}</SliderTicks>
          </SliderTrack>
          <ZoomValue>2060%</ZoomValue>
        </SliderRow>
      </Palette>
    </Screen>
  );
}
